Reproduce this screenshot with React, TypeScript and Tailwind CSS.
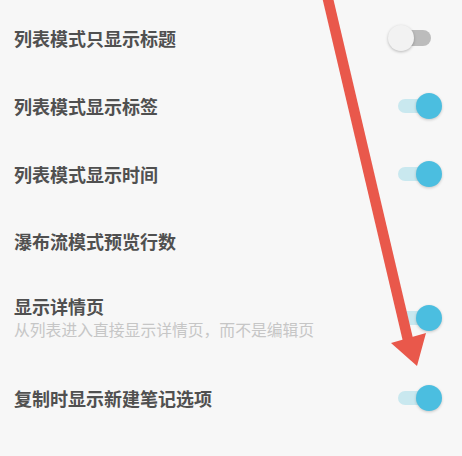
import React from "react";

function Toggle({ on }: { on: boolean }) {
  return (
    <div className="relative w-[56px] h-[28px] shrink-0">
      {on ? (
        <>
          <div className="absolute left-[11px] top-[7px] w-[34px] h-[14px] rounded-full bg-[#c9e8ef]" />
          <div className="absolute right-[1px] top-[1px] w-[26px] h-[26px] rounded-full bg-[#4bbee0] shadow-[0_1px_3px_rgba(0,0,0,0.2)]" />
        </>
      ) : (
        <>
          <div className="absolute left-[8px] top-[6px] w-[36px] h-[16px] rounded-full bg-[#bcbcbc]" />
          <div className="absolute left-[1px] top-[1px] w-[26px] h-[26px] rounded-full bg-[#f2f2f2] shadow-[0_1px_3px_rgba(0,0,0,0.25)]" />
        </>
      )}
    </div>
  );
}

function Row({
  title,
  sub,
  toggle,
  h,
}: {
  title: string;
  sub?: string;
  toggle?: boolean;
  h: string;
}) {
  return (
    <div className={`flex items-center justify-between pl-[14px] pr-[19px] ${h}`}>
      <div className="flex flex-col">
        <div className="text-[18px] leading-[24px] font-bold text-[#505050]">{title}</div>
        {sub && (
          <div className="text-[15.8px] leading-[22px] text-[#c6c6c6] mt-[1px]">{sub}</div>
        )}
      </div>
      {toggle !== undefined && <Toggle on={toggle} />}
    </div>
  );
}

export default function App() {
  return (
    <div
      className="relative w-[462px] h-[456px] overflow-hidden bg-[#f7f7f7]"
      style={{ fontFamily: '"Noto Sans CJK SC", "Noto Sans", sans-serif' }}
    >
      <div className="flex flex-col pt-[4px]">
        <Row title="列表模式只显示标题" toggle={false} h="h-[68px]" />
        <Row title="列表模式显示标签" toggle={true} h="h-[68px]" />
        <Row title="列表模式显示时间" toggle={true} h="h-[67px]" />
        <Row title="瀑布流模式预览行数" h="h-[68px]" />
        <Row
          title="显示详情页"
          sub="从列表进入直接显示详情页，而不是编辑页"
          toggle={true}
          h="h-[85px]"
        />
        <Row title="复制时显示新建笔记选项" toggle={true} h="h-[76px]" />
      </div>
      <svg
        className="absolute left-0 top-0 pointer-events-none"
        width="462"
        height="456"
        viewBox="0 0 462 456"
      >
        <line
          x1="327"
          y1="-5"
          x2="408"
          y2="340"
          stroke="#e9584b"
          strokeWidth="10.5"
        />
        <polygon points="391,343 426,333 417,366" fill="#e9584b" />
      </svg>
    </div>
  );
}
